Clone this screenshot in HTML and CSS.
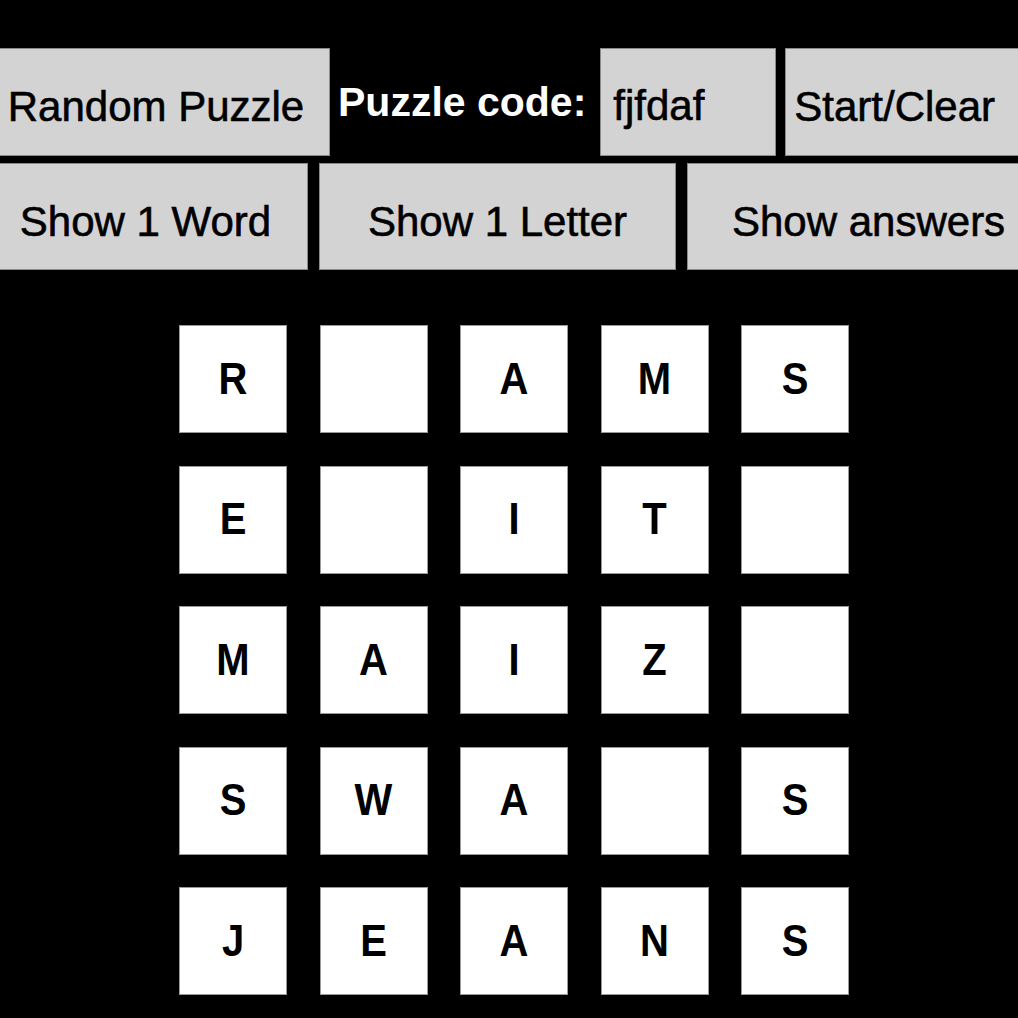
FILE: index.html
```html
<!DOCTYPE html>
<html lang="en">
<head>
  <meta charset="UTF-8" />
  <title>Word Square Puzzle</title>
  <link rel="stylesheet" href="styles.css">
</head>
<body>

  <div class="controls">
    <div class="row">
      <button class="btn btn-random">Random Puzzle</button>
      <label class="code-label" for="code">Puzzle code:</label>
      <input id="code" class="code-input" type="text" value="fjfdaf" />
      <button class="btn btn-start">Start/Clear</button>
    </div>
    <div class="row">
      <button class="btn btn-word">Show 1 Word</button>
      <button class="btn btn-letter">Show 1 Letter</button>
      <button class="btn btn-answers">Show answers</button>
    </div>
  </div>

  <div class="board">
    <div class="cell"><span>R</span></div><div class="cell"></div><div class="cell"><span>A</span></div><div class="cell"><span>M</span></div><div class="cell"><span>S</span></div>
    <div class="cell"><span>E</span></div><div class="cell"></div><div class="cell"><span>I</span></div><div class="cell"><span>T</span></div><div class="cell"></div>
    <div class="cell"><span>M</span></div><div class="cell"><span>A</span></div><div class="cell"><span>I</span></div><div class="cell"><span>Z</span></div><div class="cell"></div>
    <div class="cell"><span>S</span></div><div class="cell"><span>W</span></div><div class="cell"><span>A</span></div><div class="cell"></div><div class="cell"><span>S</span></div>
    <div class="cell"><span>J</span></div><div class="cell"><span>E</span></div><div class="cell"><span>A</span></div><div class="cell"><span>N</span></div><div class="cell"><span>S</span></div>
  </div>

</body>
</html>
```

FILE: styles.css
```css
html, body { margin: 0; padding: 0; background: #000; overflow: hidden; }
body { font-family: "Liberation Sans", Arial, sans-serif; width: 1018px; height: 1018px; }

.controls { padding-top: 48px; }
.row { display: flex; align-items: stretch; height: 108px; margin-bottom: 7px; white-space: nowrap; }
.row:last-child { height: 107px; margin-bottom: 0; }

.btn {
  flex: none;
  box-sizing: border-box;
  height: 100%;
  margin: 0;
  padding: 10px 0 0 0;
  background: #d3d3d3;
  border: 1px solid #8a8a8a;
  border-radius: 0;
  color: #000;
  font-family: inherit;
  font-size: 42px;
  text-align: center;
  -webkit-text-stroke: 0.6px #000;
}
.btn-random { width: 348px; margin-left: -18px; }
.btn-start { width: 320px; margin-left: 9px; text-align: left; padding-left: 8px; }
.btn-word { width: 325px; margin-left: -17px; }
.btn-letter { width: 357px; margin-left: 11px; }
.btn-answers { width: 400px; margin-left: 11px; text-align: left; padding-left: 44px; }

.code-label {
  display: flex;
  align-items: center;
  margin-left: 8px;
  color: #fff;
  font-weight: bold;
  font-size: 41px;
}
.code-input {
  flex: none;
  box-sizing: border-box;
  width: 176px;
  height: 100%;
  margin: 0 0 0 14px;
  padding: 8px 0 0 12px;
  background: #d3d3d3;
  border: 1px solid #8a8a8a;
  border-radius: 0;
  outline: none;
  color: #000;
  font-family: inherit;
  font-size: 42px;
  -webkit-text-stroke: 0.6px #000;
}

.board {
  display: grid;
  grid-template-columns: repeat(5, 108px);
  grid-auto-rows: 108px;
  gap: 32.5px;
  margin: 55px 0 0 179px;
}
.cell {
  box-sizing: border-box;
  display: flex;
  align-items: center;
  justify-content: center;
  background: #fff;
  border: 1px solid #999;
  color: #000;
  font-weight: bold;
  font-size: 40px;
}
.cell span { display: inline-block; transform: scaleY(1.1); }
```
